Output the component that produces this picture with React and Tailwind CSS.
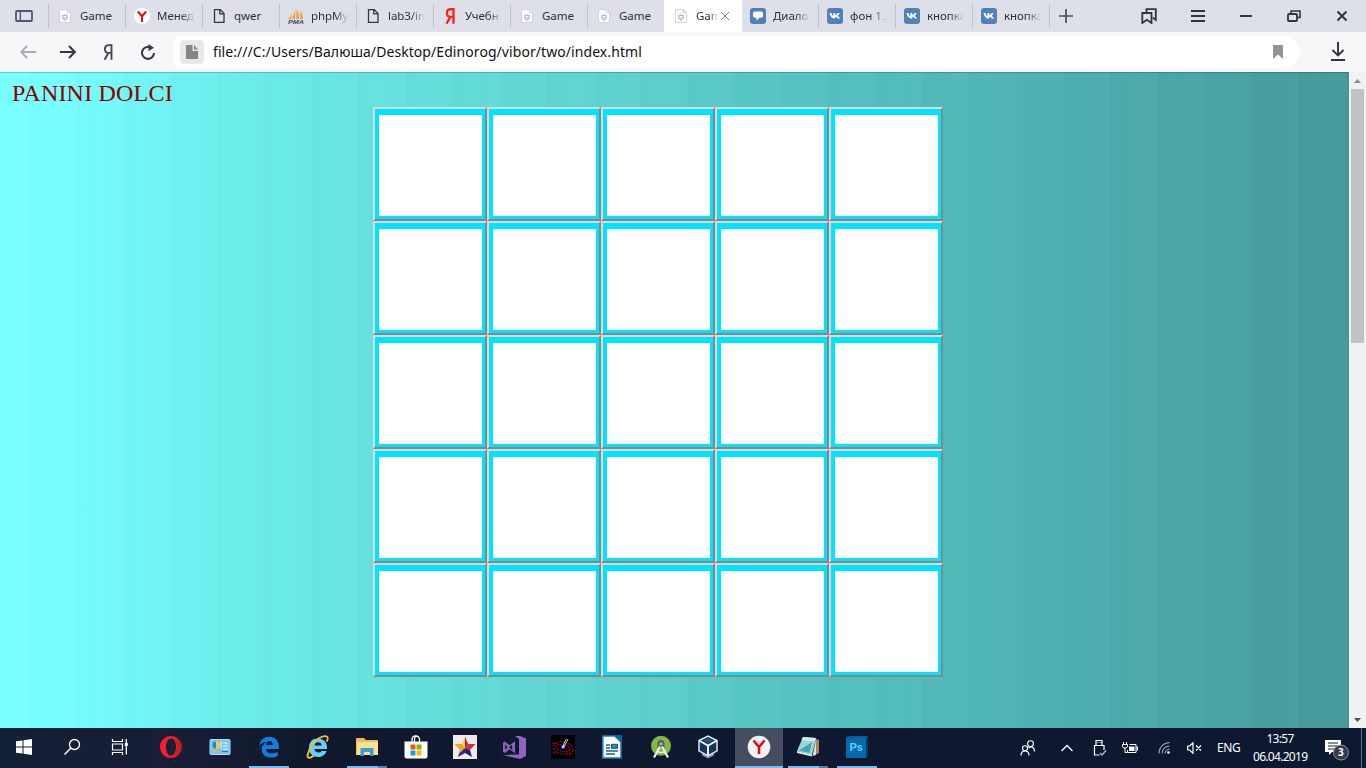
import React from 'react';

const Svg = ({ w = 24, h = w, children, className = '', vb }) => (
  <svg width={w} height={h} viewBox={vb || `0 0 ${w} ${h}`} className={`block shrink-0 ${className}`} fill="none">
    {children}
  </svg>
);

const GameIcon = () => (
  <Svg w={16}>
    <path d="M2.500 1.500h8l3 3v10h-11z" fill="#fbfbfb" stroke="#d4d4d7" />
    <path d="M10.500 1.500v3h3" stroke="#d4d4d7" />
    <path d="M4.800 7.500L8 6.300l3.200 1.200-.6 2.700L8 13.200l-2.600-3z" fill="#bebebe" />
    <path d="M6.300 8.500h3.400M8 8.500v2.700" stroke="#fff" strokeWidth=".9" />
  </Svg>
);
const YBall = () => (
  <Svg w={16}>
    <circle cx="8" cy="8" r="8" fill="#fff" />
    <path d="M3.800 3.500L8 8.300l4.200-4.800M8 8v6" stroke="#e8141c" strokeWidth="2.100" />
  </Svg>
);
const FileIcon = () => (
  <Svg w={16}>
    <path d="M3.500 1.700h5.800l3.700 3.700v8.900H3.500zM8.800 2v3.900h4" stroke="#34383d" strokeWidth="1.300" />
  </Svg>
);
const PmaIcon = () => (
  <Svg w={16}>
    <path d="M7.500 1L7 11H3.500C5 8.500 6.500 5 7.500 1zM8.500 1.500c2 2.500 3.300 5.500 2.600 9.500H7.700c.8-3 1-6 .8-9.500zM12 3c2 2 3.300 5 2.900 8h-3c.7-3 .6-5 .1-8zM1 9.500C2.500 8.500 3.500 7 4.300 5.500L3 11H.5z" fill="#f6a136" />
    <text x="0" y="15.700" fontSize="6.200" fontWeight="700" fontStyle="italic" fontFamily="Liberation Sans, sans-serif" fill="#384475" textLength="16" lengthAdjust="spacingAndGlyphs">PMA</text>
  </Svg>
);
const YaIcon = ({ color, sw = 2.300 }) => (
  <Svg w={16} className="overflow-visible">
    <path d="M11.500 15.800V1.100H9C6.400 1.100 4.900 2.700 4.900 5.100c0 2.300 1.400 3.800 3.700 3.800h2.900M8.300 9L4.500 15.800" stroke={color} strokeWidth={sw} />
  </Svg>
);
const DialogIcon = () => (
  <Svg w={16}>
    <rect width="16" height="16" rx="3" fill="#5181b8" />
    <path d="M5 3.500h6q2 0 2 2v2.300q0 2-2 2H9.500L6.500 12.500V9.800H5q-2 0-2-2V5.500q0-2 2-2z" fill="#fff" />
  </Svg>
);
const VkIcon = () => (
  <Svg w={16}>
    <rect width="16" height="16" rx="3" fill="#5181b8" />
    <path d="M2.500 5h1.900c.4 1.300 1.200 2.700 2 3.200V5h2v2.300c1-.2 1.700-1.300 2.200-2.300h2c-.3 1.200-1.200 2.200-2 2.900 1 .5 1.900 1.500 2.500 2.700h-2.200c-.5-.9-1.300-1.700-2.500-1.800v1.800H8C5 10.700 3 8.600 2.500 5z" fill="#fff" />
  </Svg>
);

const tabs = [
  ['Game', <GameIcon />, 'w-[35px]'],
  ['Менед', <YBall />, 'w-[38px]', true],
  ['qwer', <FileIcon />, 'w-[30px]'],
  ['phpMy', <PmaIcon />, 'w-[38px]', true],
  ['lab3/in', <FileIcon />, 'w-[37px]', true],
  ['Учебн', <YaIcon color="#f62312" />, 'w-[38px]', true],
  ['Game', <GameIcon />, 'w-[35px]'],
  ['Game', <GameIcon />, 'w-[35px]'],
  ['Gam', <GameIcon />, 'w-[22px]', true],
  ['Диало', <DialogIcon />, 'w-[37px]', true],
  ['фон 1.j', <VkIcon />, 'w-[37px]', true],
  ['кнопка', <VkIcon />, 'w-[37px]', true],
  ['кнопка', <VkIcon />, 'w-[37px]', true],
];

function TabStrip() {
  return (
    <div className="flex h-8 bg-[#dde0e9]">
      <div className="flex w-12 items-center justify-center">
        <Svg w={18} h={12}>
          <rect x="1" y="1" width="16" height="10" rx="1" stroke="#515873" strokeWidth="1.800" />
          <path d="M5.300 1v10" stroke="#515873" strokeWidth="1.400" />
        </Svg>
      </div>
      {tabs.map(([label, icon, w, fade], i) => {
        const active = i === 8;
        return (
          <div key={i} className={`flex items-center ${active ? '-mr-px w-[78px] bg-white' : 'w-[77px]'}`}>
            <div className={`h-6 w-px shrink-0 ${i === 8 || i === 9 ? '' : 'bg-[#c1c4ce]'}`} />
            <div className="ml-2 shrink-0">{icon}</div>
            <div className={`ml-[7px] shrink-0 overflow-hidden whitespace-nowrap text-[11.500px] leading-4 tracking-[-0.050px] text-[#2d2f35] ${w} ${fade ? '[mask-image:linear-gradient(to_right,#000_62%,transparent)]' : ''}`}>{label}</div>
            {active && (
              <Svg w={10} className="ml-[2px]">
                <path d="M1 1l8 8m0-8l-8 8" stroke="#77797d" />
              </Svg>
            )}
          </div>
        );
      })}
      <div className="my-1 flex w-8 items-center justify-center border-l border-[#c1c4ce]">
        <Svg w={14}><path d="M7 0v14M0 7h14" stroke="#484d57" strokeWidth="1.700" /></Svg>
      </div>
      <div className="flex flex-1 items-center justify-end pr-[18px] text-[#30363d]">
        <Svg w={16} className="mr-[34px]">
          <path d="M5.500 4V1.200h9.300v10.700l-3-2.400" stroke="currentColor" strokeWidth="1.800" />
          <path d="M1.300 5h9.200v10l-4.600-3.200L1.300 15z" stroke="currentColor" strokeWidth="1.800" />
        </Svg>
        <Svg w={14} className="mr-[35px]"><path d="M0 2h14M0 7h14M0 12h14" stroke="currentColor" strokeWidth="2" /></Svg>
        <Svg w={12} className="mr-[35px]"><path d="M0 6h12" stroke="currentColor" strokeWidth="2" /></Svg>
        <Svg w={14} h={12} className="mr-[35px]">
          <path d="M4 3.500V1h9v6.500h-3" stroke="currentColor" strokeWidth="1.600" />
          <rect x="1" y="4" width="9" height="7" rx="1" stroke="currentColor" strokeWidth="1.800" />
        </Svg>
        <Svg w={12}><path d="M1.500 1.500l9 9m0-9l-9 9" stroke="currentColor" strokeWidth="2" /></Svg>
      </div>
    </div>
  );
}

function Toolbar() {
  return (
    <div className="flex h-10 items-center bg-[#f6f7f9]">
      <div className="ml-5 flex items-center">
        <Svg w={16}><path d="M16 8H1.500M7 2L1.200 8 7 14" stroke="#a9abae" strokeWidth="1.800" /></Svg>
        <Svg w={16} className="ml-6"><path d="M0 8h14.500M9 2l5.800 6L9 14" stroke="#34393e" strokeWidth="2" /></Svg>
        <div className="ml-6"><YaIcon color="#43494e" sw={1.900} /></div>
        <Svg w={16} className="ml-6">
          <path d="M10.500 3.400A6 6 0 1 0 14 9" stroke="#383d42" strokeWidth="2.100" />
          <path d="M8.500 0L14 3.700 8.500 7.200z" fill="#383d42" />
        </Svg>
      </div>
      <div className="ml-[17px] flex h-8 w-[1128px] items-center rounded-l-lg bg-white pl-[7px] [clip-path:polygon(0_0,1117px_0,1122px_4px,100%_50%,1122px_28px,1117px_100%,0_100%)]">
        <div className="flex h-6 w-6 items-center justify-center rounded-sm bg-[#e8e8e8]">
          <Svg w={12} h={14}><path d="M0 0h6.500v6H12v8H0zM8 0l4 4.500H8z" fill="#858585" /></Svg>
        </div>
        <div className="ml-[9px] w-[429px] whitespace-nowrap text-[14px] leading-5 tracking-[0.070px] text-[#111]">
          file:///C:/Users/Валюша/Desktop/Edinorog/vibor/two/index.html
        </div>
        <Svg w={10} h={14} className="ml-[631px]"><path d="M0 0h10v14L5 9.500 0 14z" fill="#949494" /></Svg>
      </div>
      <Svg w={14} h={20} className="ml-[30px]">
        <path d="M7 0v13M1.500 8L7 13.500 12.500 8M0 18h14" stroke="#30363d" strokeWidth="1.900" />
      </Svg>
    </div>
  );
}

function Page() {
  return (
    <div className="flex h-[656px]">
      <div className="flex w-[1349px] flex-col bg-[linear-gradient(90deg,#78ffff_0px,#77ffff_45px,#6ef3f2_170px,#66e3e1_360px,#5dd1ce_620px,#53c2c2_810px,#50b5b5_1000px,#49a4a5_1200px,#46999a_1349px)]">
        <div className="flex flex-1 flex-col border-t border-black/20 bg-[repeating-linear-gradient(90deg,#ffffff00_0px,#ffffff05_29px,#00000003_30px,#00000000_47px)]">
          <h1 className="ml-3 h-[34px] whitespace-nowrap pt-[6px] font-['Liberation_Serif',serif] text-[24px] leading-7 tracking-[0.200px] text-[#8b0000]">PANINI DOLCI</h1>
          <div className="ml-[373px] grid w-[570px] grid-cols-5">
            {Array.from({ length: 25 }, (_, i) => (
              <div key={i} className="h-[114px] border-2 border-b-[#8b8583] border-l-[#d9d9d9] border-r-[#8b8583] border-t-[#d9d9d9] bg-[#00e5ff] pb-[3px] pl-1 pr-[3px] pt-[6px]">
                <div className="h-full bg-white" />
              </div>
            ))}
          </div>
        </div>
      </div>
      <div className="flex w-[17px] flex-col items-center bg-[#f1f1f1]">
        <div className="flex h-[17px] items-center"><Svg w={7} h={4}><path d="M0 4l3.500-4L7 4z" fill="#8a8a8a" /></Svg></div>
        <div className="h-[254px] w-[13px] bg-[#c1c1c1]" />
        <div className="mt-auto flex h-[17px] items-center"><Svg w={7} h={4}><path d="M0 0h7L3.500 4z" fill="#505050" /></Svg></div>
      </div>
    </div>
  );
}

const apps = [
  [<Svg w={16}><path d="M0 2.300l6.500-.9v6.100H0zM7.500 1.200L16 0v7.500H7.500zM0 8.500h6.500v6.100L0 13.700zM7.500 8.500H16V16l-8.500-1.200z" fill="#fff" /></Svg>],
  [<Svg w={18}><circle cx="11.500" cy="6.500" r="5" stroke="#fff" strokeWidth="1.300" /><path d="M8 10l-6.500 6.500" stroke="#fff" strokeWidth="1.500" /></Svg>],
  [<Svg w={18}><path d="M1.500 1v2.500h10V1M1.500 17v-2.500h10V17M1.500 6h10v6h-10zM15.300 1v15.500" stroke="#fff" strokeWidth="1.200" /><path d="M13.800 5h3v3h-3z" fill="#fff" /></Svg>],
  [<Svg w={24}><defs><linearGradient id="op" x1="0" x2="1"><stop stopColor="#ff1b2d" /><stop offset=".55" stopColor="#e9232d" /><stop offset="1" stopColor="#b8181c" /></linearGradient></defs><path fillRule="evenodd" d="M12 1a11 11 0 1 0 0 22 11 11 0 0 0 0-22zm0 2.500c2.800 0 5 3.600 5 8.500s-2.200 8.500-5 8.500S7 17 7 12s2.200-8.500 5-8.500z" fill="url(#op)" /></Svg>],
  [<Svg w={22} h={18}><rect x="1" y="1.500" width="20" height="15" rx="1" fill="#75c5ee" stroke="#a8def6" /><circle cx="7" cy="7" r="3.500" fill="#218bc6" /><path d="M7 7V3a4 4 0 0 1 0 8z" fill="#ffc544" /><path d="M14 5h5M14 8h5M14 11h5M12 3v8" stroke="#e8f8ff" /><path d="M3 13.500h8" stroke="#f4b044" strokeWidth="1.500" /><path d="M13 13.500h6" stroke="#187bb2" /></Svg>],
  [<Svg w={22}><path d="M1.300 10C2 4.200 5.500.8 11.300.8c5.800 0 9.500 4 9.500 9.500V13H8c.2 3 2.500 4.500 5.700 4.500 2.200 0 4.200-.7 6-1.700v4.100c-2 1.100-4.500 1.700-7 1.700-5.400 0-8.900-3.200-8.900-8 0-3.500 1.800-6 4.900-7.500C4.800 6.300 2.800 7.600 1.300 10zM8.100 9h6.700c0-2.500-1.100-3.900-3.200-3.900C9.600 5.100 8.400 6.500 8.100 9z" fill="#0b80df" /></Svg>, 'edge'],
  [<Svg w={24}><path d="M3 13C3 6.500 6.500 3.500 12 3.500s9 3.700 9 9V14H8.500c.2 2.200 1.600 3.500 4 3.500 1.500 0 2.500-.5 3.100-1.500h5C19.200 20 16.200 22 12 22c-5.500 0-9-3.500-9-9zm5.600-2.500h7.100c-.2-2-1.400-3.200-3.500-3.200s-3.300 1.200-3.600 3.200z" fill="#67cef6" /><path d="M3 16C.8 21 1 23.500 4.500 22.500c1.500-.5 2.500-1.200 3.500-2M2.500 17C4 12 8 6.500 13 3.300 18 .2 22.500.2 21.500 4.500l-.8 2.300" stroke="#f0be2d" strokeWidth="1.900" /></Svg>],
  [<Svg w={22} h={20}><path d="M0 2q0-1 1-1h7l2 2h11q1 0 1 1v14H0z" fill="#e9bd58" /><path d="M1 5h21v13H1z" fill="#fbe090" /><path d="M4.500 19v-8h13v8H14v-4H8v4z" fill="#379fd9" /></Svg>, 'folder'],
  [<Svg w={24}><path d="M8 7V4.500C8 0 15.500-.5 15.500 4.500V7M10.500 7V4C10.500 2 12 1 14 1.500" stroke="#fff" strokeWidth="1.300" /><path d="M.5 6.500h23v15q0 2-2 2h-19q-2 0-2-2z" fill="#fff" /><path d="M6.500 9.500h5v5h-5z" fill="#f25022" /><path d="M12.500 9.500h5v5h-5z" fill="#7fba00" /><path d="M6.500 15.500h5v5h-5z" fill="#00a4ef" /><path d="M12.500 15.500h5v5h-5z" fill="#ffb900" /></Svg>],
  [<Svg w={24}><path d="M0 0h24v24H0z" fill="#eee9ea" /><path d="M12 1.500L9 9l3 4z" fill="#ffd12e" /><path d="M12 1.500L15 9l-3 4z" fill="#a92336" /><path d="M1.500 9H9l3 4-5 2z" fill="#f0a52a" /><path d="M15 9h7.500L17 15l-5-2z" fill="#d92746" /><path d="M5 22l2-7 5-2v5z" fill="#3b2292" /><path d="M19 22l-2-7-5-2v5z" fill="#27206c" /><path d="M7 15l5-2-6.200 6z" fill="#e6c12c" /></Svg>],
  [<Svg w={24}><path d="M1 7.500L3 6.500l4.500 3.700 5.500-4v12l-5.500-4L3 18l-2-1zM3 9.500v5l2.500-2.300zm7 0L7.300 12.200 10.200 15z" fill="#8d60bb" fillRule="evenodd" /><path d="M13 1h5l6 2.500v17.500l-6 3L1 20l16-.5V4z" fill="#9065c0" /></Svg>],
  [<Svg w={24}><path d="M0 0h24v24H0z" fill="#020104" /><g stroke="#a80b20" strokeDasharray="2 1"><ellipse cx="12" cy="13" rx="10" ry="6" transform="rotate(12 12 13)" /><ellipse cx="12" cy="13" rx="7" ry="3.500" transform="rotate(12 12 13)" /><path d="M1 8l6 1M15 18l7 2M2 17l5 2" /></g><circle cx="12" cy="12" r="2.300" fill="#1730f0" /><path d="M12 12l1.500-5 2-3M13 12l4-8" stroke="#c8c8d4" strokeWidth="1" /><circle cx="12" cy="12" r="1" fill="#fff" /></Svg>],
  [<Svg w={20} h={24}><path d="M.8 1h12L19 7v16H.8z" fill="#fff" stroke="#1682b5" strokeWidth="1.600" /><path d="M12 0h8v7z" fill="#0b639a" /><path d="M4 10h4M4 13h4M4 16h12M4 19h9" stroke="#17648e" strokeWidth="1.500" /><path d="M9.500 9.300h6v4h-6z" fill="#2b8cc0" stroke="#15486c" /></Svg>],
  [<Svg w={24}><circle cx="12" cy="10.800" r="10" fill="#82b943" /><path d="M8.500 13V8.500a3.500 3.500 0 0 1 7 0V13z" fill="#536364" /><path d="M11 11.500L5 22.500M13 11.500l6 11" stroke="#e8eeeb" strokeWidth="2.200" /><path d="M7.500 16q4.500 3 9 0" stroke="#e8eeeb" strokeWidth="1.500" /><circle cx="12" cy="8.800" r="1.500" fill="#a9c0a5" /></Svg>],
  [<Svg w={22} h={24}><path d="M5 16v4.500l6 3 6-3V16z" fill="#7f8fa8" /><path d="M2 5.500L11 1l9 4.500v10.300L11 21l-9-5.200z" fill="#17365f" stroke="#dce6ef" strokeWidth="1.500" /><path d="M2 5.500l9 5 9-5M11 10.500V21" stroke="#e8eff5" strokeWidth="2" /><path d="M6 5.500l5-2.300 5 2.300-5 2.500z" fill="#2b527f" /></Svg>],
  [<Svg w={24}><circle cx="12" cy="12" r="11.300" fill="#f2f2f2" /><path d="M6.500 5.500L12 12l5.500-6.500M12 11.500V19" stroke="#e30613" strokeWidth="2.500" /></Svg>, 'active'],
  [<Svg w={24}><path d="M20 4l3 1v13l-4 2z" fill="#ad8558" /><path d="M7 2l13 1-4 17L1 16z" fill="#96d9dc" /><path d="M7 2l13 1-1 3.500L5.500 5z" fill="#dfe9e4" /><path d="M1 16l15 3.500-.3 2L1 18z" fill="#dbe8e8" /><path d="M3 15.500L16 7l-2.500 11z" fill="#4aa3b1" /><path d="M20 4l-3.500 17 3.500-1z" fill="#e5ddd0" /></Svg>, 'notepad'],
  [<Svg w={22}><path d="M0 1.500L2 0h20v19.500L20 22H0z" fill="#0a5b98" /><path d="M0 2h20v20H0z" fill="#0769ab" /><path d="M20 2l2-2v19.500L20 22z" fill="#073a68" /><text x="3.500" y="15" fill="#5bd5ff" fontFamily="Liberation Sans,sans-serif" fontWeight="700" fontSize="11">Ps</text></Svg>, 'ps'],
];

function Taskbar() {
  return (
    <div className="flex h-10 bg-[linear-gradient(90deg,#142035_0%,#181f36_12%,#10182e_22%,#0d1831_100%)] text-white">
      {apps.map(([icon, state], i) => (
        <div key={i} className={`flex shrink-0 flex-col items-center ${i < 3 ? 'w-12' : state === 'active' ? 'ml-px w-12 bg-[#444e60]' : 'w-[49px]'} ${i === 3 ? 'ml-0.5' : ''} ${i === 14 ? '-ml-0.5 mr-0.5' : ''}`}>
          <div className="flex h-[38px] items-center">{icon}</div>
          {state && (
            <div className={`flex h-0.5 ${state === 'active' ? 'w-full' : 'w-10'} bg-[#7cb9ed]`}>
              {(state === 'folder' || state === 'notepad') && <div className="ml-auto w-[9px] bg-[#527fae]" />}
            </div>
          )}
        </div>
      ))}
      <div className="ml-auto flex items-center">
        <Svg w={16} className="mr-[25px]">
          <circle cx="10.500" cy="3.700" r="2.900" stroke="#fff" strokeWidth="1.100" /><circle cx="5" cy="8.300" r="2.500" stroke="#fff" strokeWidth="1.100" />
          <path d="M1 15.500c0-6 8-6 8 0M8.500 8c3-2.500 6-.5 6 3.500" stroke="#fff" strokeWidth="1.200" />
        </Svg>
        <Svg w={12} h={8} className="mr-5"><path d="M.5 7L6 1.500 11.500 7" stroke="#fff" strokeWidth="1.300" /></Svg>
        <Svg w={14} h={18} className="mr-[15px]">
          <path d="M3 6V1.500h6V6M1 6.500h10V11M1.500 6v10h5" stroke="#fff" strokeWidth="1.200" /><path d="M4.500 3.500h1M6.800 3.500h1" stroke="#fff" /><path d="M7 14l2 2 4-4.500" stroke="#b4bcc8" strokeWidth="1.300" />
        </Svg>
        <Svg w={16} h={12} className="mr-5">
          <path d="M1.500 0v2.500m3-2.500v2.500M.5 2.500h5v2q0 1.500-2.500 1.500T.5 4.500zM3 6v4.500h2" stroke="#fff" /><path d="M7.500 2.500H14v8H5.500V8M14 5h1.500v3H14" stroke="#fff" /><path d="M7 4.500h5.500v4.500H7z" fill="#fff" />
        </Svg>
        <Svg w={12} className="mr-[17px]">
          <path d="M.8 11.500C1.500 5 5 1 11.500.5M4 11.500c.3-4 3-7 7.500-7.500M7 11.500c.3-2.500 2-4 4.500-4.500" stroke="#9da5b1" strokeWidth="1.200" /><circle cx="10.500" cy="10.500" r="1.300" fill="#fff" />
        </Svg>
        <Svg w={15} h={12} className="mr-[15px]"><path d="M.7 4h2L6 .8v10.500L2.700 8h-2zM9 3.500l5 5m0-5l-5 5" stroke="#fff" strokeWidth="1.200" /></Svg>
        <div className="w-6 whitespace-nowrap text-[12px] tracking-[-0.400px]">ENG</div>
        <div className="ml-3 w-[54px] text-center text-[12px] leading-[18px] tracking-[-0.700px]">
          <div>13:57</div>
          <div className="whitespace-nowrap">06.04.2019</div>
        </div>
        <div className="relative ml-[18px] mr-[12px]">
          <Svg w={24} className="translate-y-px">
            <path d="M0 3h16v12h-9l-3 3v-3H0z" fill="#fff" /><path d="M3 6h10M3 9h10M3 12h7" stroke="#142036" />
            <circle cx="16" cy="15.500" r="7.500" fill="#353b48" stroke="#8d929b" />
          </Svg>
          <span className="absolute left-[13px] top-[9px] text-[10px] font-bold leading-[15px]">3</span>
        </div>
        <div className="h-10 w-[5px] border-l border-[#697080]" />
      </div>
    </div>
  );
}

export default function App() {
  return (
    <div className="h-[768px] w-[1366px] overflow-hidden font-['Noto_Sans','Open_Sans',sans-serif]">
      <TabStrip />
      <Toolbar />
      <Page />
      <Taskbar />
    </div>
  );
}
